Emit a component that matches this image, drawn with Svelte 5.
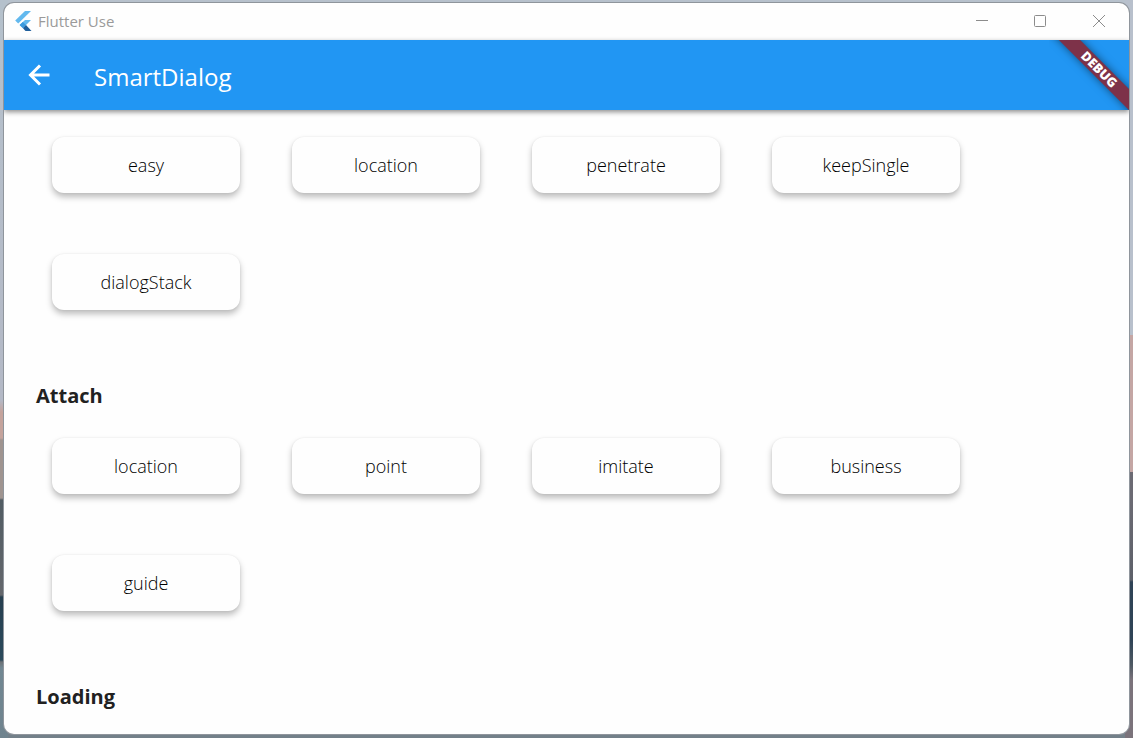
<script>
  const dialogItems = ['easy', 'location', 'penetrate', 'keepSingle', 'dialogStack'];
  const attachItems = ['location', 'point', 'imitate', 'business', 'guide'];
</script>

<div class="desktop">
  <div class="window">
    <header class="titlebar">
      <svg class="logo" width="18" height="20" viewBox="0 0 18 20" aria-hidden="true">
        <path d="M10 0H16L3.2 12.6L0.2 9.6Z" fill="#63b9ee" />
        <path d="M10 9H16L11 14L8 17.2L4.6 14Z" fill="#63b9ee" />
        <path d="M7.8 11L11 14L8 17.2L4.6 14Z" fill="#3c9ade" />
        <path d="M8 17.2L11 14L16.5 20H10.5Z" fill="#1f5f9c" />
      </svg>
      <span class="caption">Flutter Use</span>
      <div class="controls">
        <button aria-label="Minimize">
          <svg width="14" height="14" viewBox="0 0 14 14"><path d="M2 6.5H14" /></svg>
        </button>
        <button aria-label="Maximize">
          <svg width="14" height="14" viewBox="0 0 14 14"><rect x="1.5" y="1.5" width="11" height="11" rx="1" /></svg>
        </button>
        <button aria-label="Close">
          <svg width="14" height="14" viewBox="0 0 14 14"><path d="M1 1L13 13M13 1L1 13" /></svg>
        </button>
      </div>
    </header>

    <nav class="appbar">
      <button class="back" aria-label="Back">
        <svg width="22" height="22" viewBox="0 0 22 22"><path d="M12 1.5L2.5 11L12 20.5M3 11H21.5" /></svg>
      </button>
      <h1>SmartDialog</h1>
      <div class="corner"><span class="ribbon">DEBUG</span></div>
    </nav>

    <main>
      <div class="items">
        {#each dialogItems as item}
          <button class="card">{item}</button>
        {/each}
      </div>
      <h2>Attach</h2>
      <div class="items">
        {#each attachItems as item}
          <button class="card">{item}</button>
        {/each}
      </div>
      <h2>Loading</h2>
    </main>
  </div>
</div>

<style>
  :global(body) {
    margin: 0;
  }
  .desktop {
    box-sizing: border-box;
    height: 100vh;
    padding: 3px 4px 4px;
    font-family: "Segoe UI", "Open Sans", "Noto Sans", sans-serif;
    background:
      linear-gradient(#b8c0cc 0 335px, #c4a6a4 335px 472px, #6b6a73 472px 500px, #5d6069 580px, #2f4356 582px 640px, #4e5963 665px, #7b737b 680px) right / 8px 100% no-repeat,
      linear-gradient(#b5c1cc 0, #b4b9c6 400px, #c4a39c 412px 438px, #9f9490 440px 498px, #515c63 500px, #64676c 595px, #263f4f 597px, #2b4a5c 660px, #6c7276 662px, #718792 668px, #6f838e) left / 8px 100% no-repeat,
      linear-gradient(#b7c1cc 0 50%, #738089 50%);
  }
  .window {
    display: flex;
    flex-direction: column;
    height: 100%;
    border-radius: 10px;
    overflow: hidden;
    background: #fefefe;
    box-shadow: 0 0 0 1px #8f959c;
  }
  button {
    padding: 0;
    border: 0;
    background: none;
    font-family: inherit;
  }
  .titlebar {
    box-sizing: border-box;
    display: flex;
    align-items: center;
    flex: none;
    height: 37px;
    padding: 0 1px 2px 11px;
  }
  .caption {
    margin-left: 5px;
    font-size: 15px;
    color: #9a9a9a;
  }
  .controls {
    display: flex;
    align-self: stretch;
    margin-left: auto;
  }
  .controls button {
    display: grid;
    place-items: center;
    width: 59px;
  }
  .controls svg {
    fill: none;
    stroke: #8c8c8c;
  }
  .appbar {
    position: relative;
    display: flex;
    align-items: center;
    flex: none;
    height: 70px;
    background: #2196f3;
    box-shadow: 0 2px 5px rgba(0, 0, 0, 0.45);
  }
  .back {
    display: grid;
    place-items: center;
    width: 70px;
    height: 70px;
  }
  .back svg {
    fill: none;
    stroke: #fff;
    stroke-width: 3;
  }
  h1 {
    margin: 0;
    padding: 2px 0 0 20px;
    font-size: 24px;
    font-weight: 400;
    color: #fff;
  }
  .corner {
    position: absolute;
    top: 0;
    right: 0;
    width: 80px;
    height: 70px;
    overflow: hidden;
  }
  .ribbon {
    position: absolute;
    top: 22px;
    right: -40px;
    width: 140px;
    height: 15px;
    line-height: 15px;
    text-align: center;
    font-size: 13px;
    font-weight: 800;
    color: #fff;
    background: #7d3249;
    box-shadow: 0 0 8px rgba(0, 0, 0, 0.5);
    transform: rotate(45deg);
  }
  main {
    flex: 1;
    min-height: 0;
    overflow: hidden;
    padding: 27px 32px 0;
  }
  .items {
    display: flex;
    flex-wrap: wrap;
    gap: 61px 52px;
    padding: 0 16px;
  }
  .card {
    width: 188px;
    height: 56px;
    border-radius: 12px;
    background: #fefefe;
    font-size: 18px;
    font-weight: 300;
    color: #000;
    box-shadow: 0 4px 6px rgba(0, 0, 0, 0.26), 0 0 2px rgba(0, 0, 0, 0.08);
  }
  h2 {
    margin: 71px 0 27px;
    font-size: 20px;
    line-height: 30px;
    font-weight: 700;
    color: #212121;
  }
</style>
